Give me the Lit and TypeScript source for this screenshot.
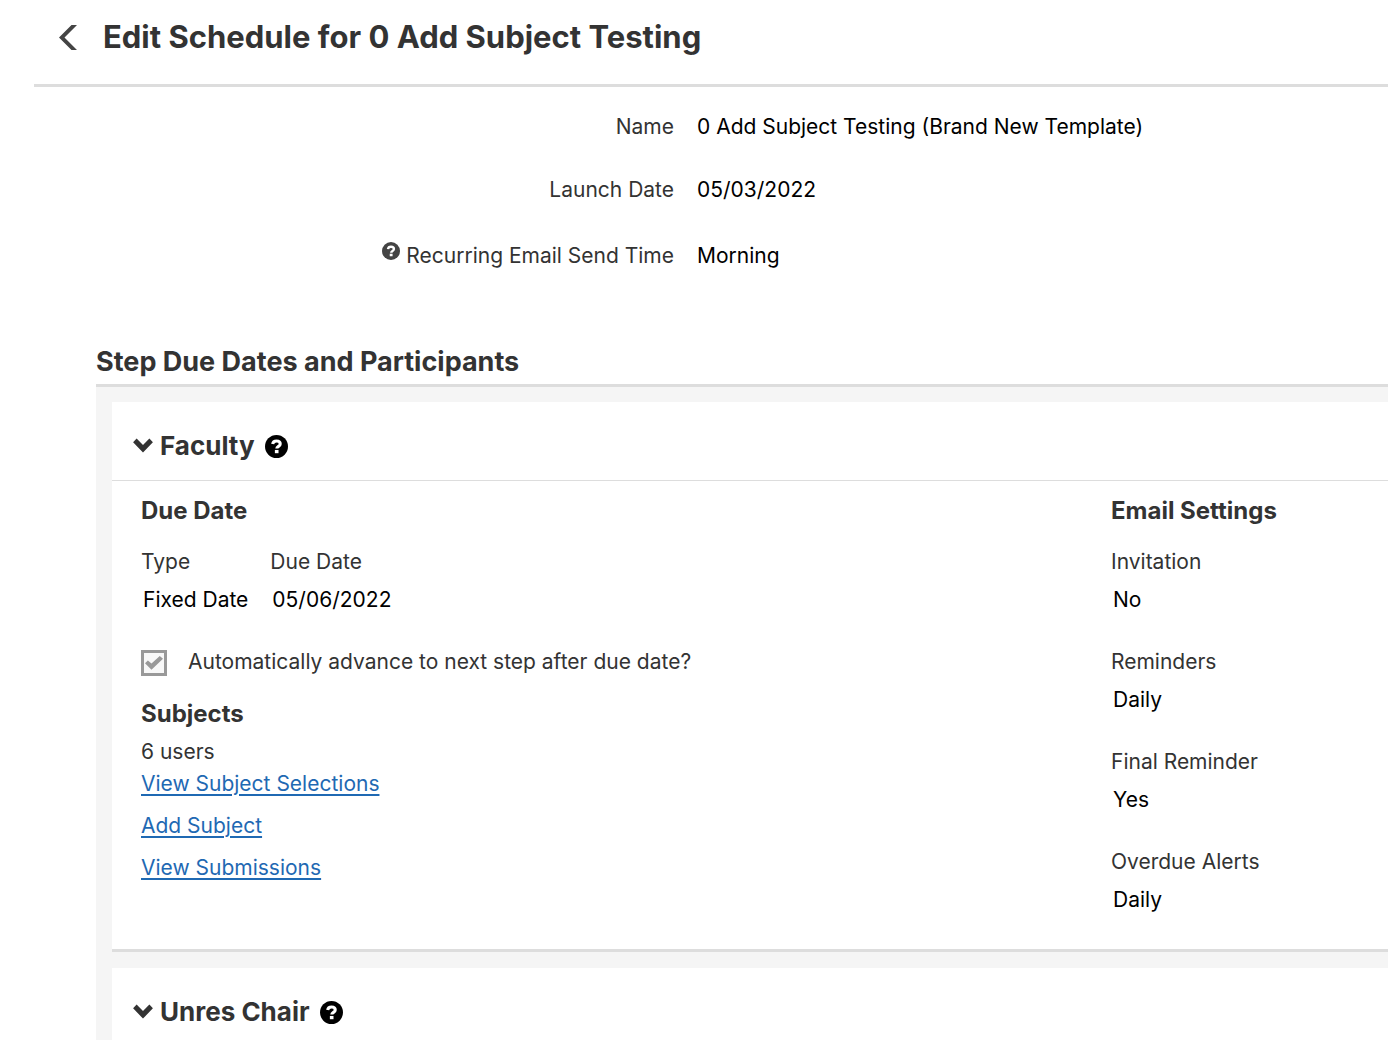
import { LitElement, html, css, svg } from "lit";
import { customElement, property } from "lit/decorators.js";

@customElement("help-button")
class HelpButton extends LitElement {
  static styles = css`
    :host { display: inline-flex; }
    .help { display: flex; align-items: flex-start; padding: 0; border: 0; background: none; color: inherit; cursor: pointer; }
  `;
  @property({ type: Number }) size = 23;
  render() {
    return html`<button class="help" type="button" aria-label="Help">
      <svg width=${this.size} height=${this.size} viewBox="0 0 24 24" aria-hidden="true">
        <circle cx="12" cy="12" r="12" fill="currentColor"/>
        <path d="M8 9.4C8.3 7.3 9.8 6.3 12 6.3c2.2 0 3.9 1.2 3.9 3.1 0 2.6-3.6 2.4-3.6 4.8" fill="none" stroke="#fff" stroke-width="3.2"/>
        <rect x="10.3" y="15.6" width="3.8" height="3.4" fill="#fff"/>
      </svg>
    </button>`;
  }
}

const chevron = svg`<path d="M1 5.5L4.2 2.2L10 8L15.8 2.2L19 5.5L10 15Z" fill="currentColor"/>`;

const details = [
  { label: "Name", value: "0 Add Subject Testing (Brand New Template)", help: false },
  { label: "Launch Date", value: "05/03/2022", help: false },
  { label: "Recurring Email Send Time", value: "Morning", help: true },
];

const emails = [
  { label: "Invitation", value: "No" },
  { label: "Reminders", value: "Daily" },
  { label: "Final Reminder", value: "Yes" },
  { label: "Overdue Alerts", value: "Daily" },
];

@customElement("app-root")
class AppRoot extends LitElement {
  static styles = css`
    :host {
      display: block;
      height: 100vh;
      overflow: hidden;
      background: #fff;
      color: #333;
      font: 21px/32px Inter, sans-serif;
    }
    * { box-sizing: border-box; }
    h1, h2, h3, h4, p, dl, dd { margin: 0; }
    .header {
      display: flex;
      align-items: center;
      gap: 24px;
      height: 87px;
      margin-left: 34px;
      padding: 0 0 10px 24px;
      border-bottom: 3px solid #ddd;
    }
    .back { display: flex; color: #444; }
    h1, h2, h3, h4 { font-weight: 700; }
    h1 { font-size: 31px; line-height: 40px; }
    .details { display: grid; gap: 31px; padding-top: 24px; }
    .detail { display: grid; grid-template-columns: 674fr 714fr; }
    .detail dt { display: flex; justify-content: flex-end; gap: 6px; }
    .detail dd { padding-left: 23px; }
    .with-help { padding-top: 3px; }
    .detail help-button { padding-top: 2px; align-self: flex-start; color: #444; }
    dd { color: #000; }
    .steps { margin: 68px 0 0 96px; }
    h2 { font-size: 27px; line-height: 44px; border-bottom: 3px solid #ddd; }
    .panels { display: grid; gap: 16px; padding: 15px 0 0 16px; background: #f5f5f5; }
    .panel { background: #fff; border-bottom: 3px solid #ddd; }
    .panel-head { display: flex; align-items: center; height: 79px; padding: 10px 0 0 20px; border-bottom: 1px solid #ddd; }
    .toggle { display: flex; align-items: center; gap: 6px; padding: 0; border: 0; background: none; color: #333; font: inherit; cursor: pointer; }
    .panel-head help-button { margin-left: 10px; color: #000; }
    h3 { font-size: 26px; line-height: 32px; }
    .panel-body { display: grid; grid-template-columns: 970fr 277fr; padding: 14px 0 30px 29px; }
    h4 { font-size: 24px; line-height: 32px; }
    .due { display: flex; gap: 22px; margin-top: 16px; }
    .field { line-height: 38px; }
    .field dd { padding-left: 2px; }
    .advance { display: flex; align-items: center; gap: 21px; margin: 27px 0 20px; }
    .check {
      appearance: none;
      width: 26px;
      height: 26px;
      margin: 2px 0 0;
      border: 3px solid #999;
      background: #f8f8f8;
      display: grid;
      place-items: center;
    }
    .check:checked::before {
      content: "";
      width: 18px;
      height: 14px;
      background: #999;
      clip-path: polygon(0 52%, 16% 32%, 36% 54%, 82% 0, 100% 20%, 36% 98%);
    }
    .users { margin-top: 6px; }
    .links { display: grid; justify-items: start; gap: 10px; }
    a { color: #1f69b3; text-underline-offset: 3px; text-decoration-thickness: 2px; }
    .emails { display: grid; gap: 24px; margin-top: 16px; }
  `;

  private panelHead(title: string) {
    return html`<div class="panel-head">
      <button class="toggle" type="button" aria-expanded="true">
        <svg width="22" height="20" viewBox="0 0 20 18" aria-hidden="true">${chevron}</svg>
        <h3>${title}</h3>
      </button>
      <help-button></help-button>
    </div>`;
  }

  private field(label: string, value: string) {
    return html`<div class="field"><dt>${label}</dt><dd>${value}</dd></div>`;
  }

  render() {
    return html`
      <header class="header">
        <a class="back" href="#" aria-label="Back">
          <svg width="21" height="28" viewBox="0 0 21 28" aria-hidden="true">
            <path d="M13.5 2H19L6.5 14.5L19 27H13.5L1 14.5Z" fill="currentColor"/>
          </svg>
        </a>
        <h1>Edit Schedule for 0 Add Subject Testing</h1>
      </header>
      <main>
        <dl class="details">
          ${details.map((d) => html`<div class=${d.help ? "detail with-help" : "detail"}>
            <dt>${d.help ? html`<help-button size="18"></help-button>` : ""}${d.label}</dt>
            <dd>${d.value}</dd>
          </div>`)}
        </dl>
        <section class="steps">
          <h2>Step Due Dates and Participants</h2>
          <div class="panels">
            <section class="panel">
              ${this.panelHead("Faculty")}
              <div class="panel-body">
                <div>
                  <h4>Due Date</h4>
                  <dl class="due">${this.field("Type", "Fixed Date")}${this.field("Due Date", "05/06/2022")}</dl>
                  <div class="advance">
                    <input class="check" id="advance" type="checkbox" checked disabled>
                    <label for="advance">Automatically advance to next step after due date?</label>
                  </div>
                  <h4>Subjects</h4>
                  <p class="users">6 users</p>
                  <div class="links">
                    <a href="#">View Subject Selections</a>
                    <a href="#">Add Subject</a>
                    <a href="#">View Submissions</a>
                  </div>
                </div>
                <div>
                  <h4>Email Settings</h4>
                  <dl class="emails">${emails.map((e) => this.field(e.label, e.value))}</dl>
                </div>
              </div>
            </section>
            <section class="panel">${this.panelHead("Unres Chair")}</section>
          </div>
        </section>
      </main>
    `;
  }
}
